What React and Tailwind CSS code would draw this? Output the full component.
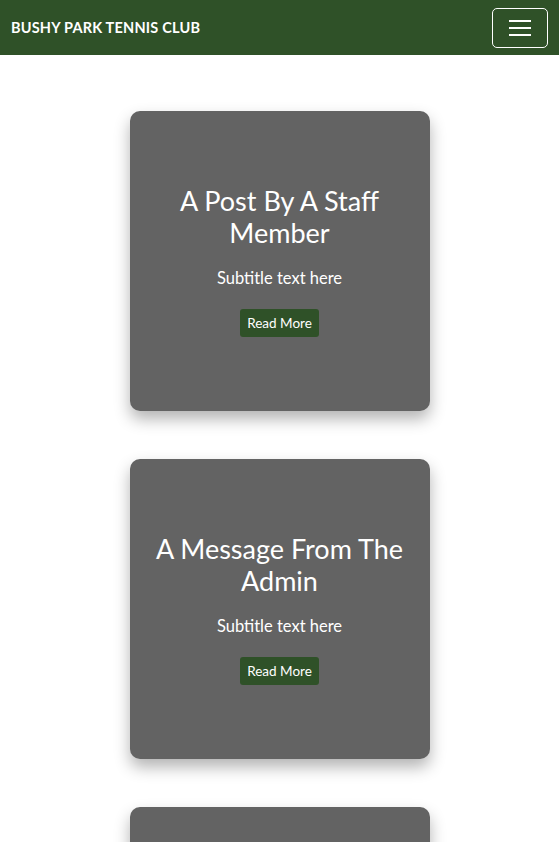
export default function App() {
  const posts = [
    "A Post By A Staff Member",
    "A Message From The Admin",
    "Club News Update",
  ];
  return (
    <div className="min-h-[842px] bg-white" style={{ fontFamily: "Lato, 'Open Sans', sans-serif" }}>
      <nav className="h-[55px] bg-[#2f5128] flex items-center justify-between pl-[11px] pr-[11px]">
        <span className="text-white font-bold text-[14.5px] tracking-[0.2px]">BUSHY PARK TENNIS CLUB</span>
        <button className="w-[56px] h-[40px] border border-white rounded-[5px] flex items-center justify-center">
          <svg width="24" height="20" viewBox="0 0 24 20">
            <path d="M1 3h22M1 10h22M1 17h22" stroke="white" strokeWidth="2" />
          </svg>
        </button>
      </nav>
      <div className="flex flex-col items-center gap-[48px] pt-[56px]">
        {posts.map((t) => (
          <div
            key={t}
            className="w-[300px] h-[300px] bg-[#636363] rounded-[10px] shadow-[0_8px_16px_rgba(0,0,0,0.3)] flex flex-col items-center justify-center text-center text-white px-[16px]"
          >
            <h2 className="text-[27px] leading-[32px] font-normal">{t}</h2>
            <p className="text-[16.5px] mt-[17px]">Subtitle text here</p>
            <button className="mt-[18px] h-[28px] px-[7px] bg-[#2f5128] rounded-[3px] text-[13.5px] text-white">
              Read More
            </button>
          </div>
        ))}
      </div>
    </div>
  );
}
